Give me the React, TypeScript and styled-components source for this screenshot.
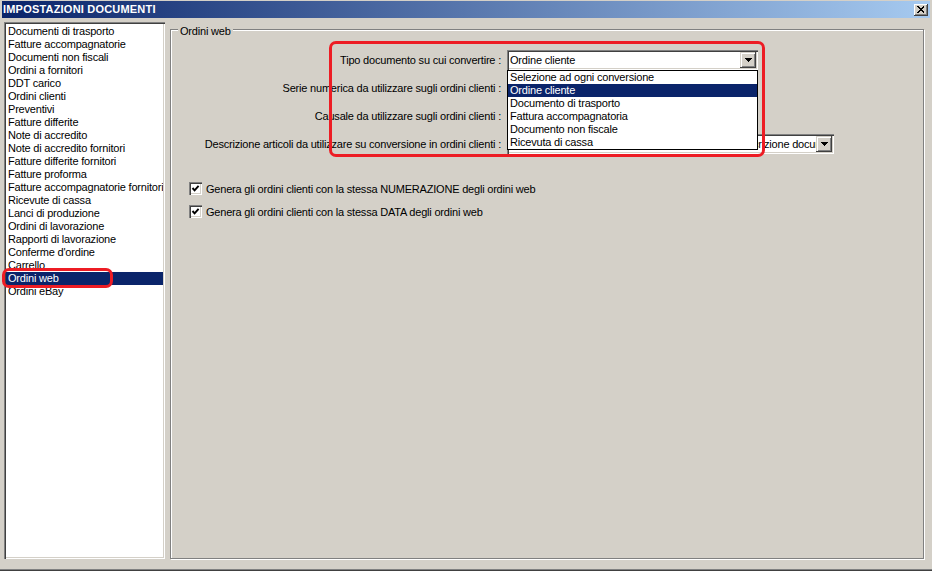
import React from "react";
import styled, { createGlobalStyle } from "styled-components";

const GlobalStyle = createGlobalStyle`
  html, body {
    margin: 0;
    padding: 0;
    background: #d4d0c8;
  }
  body {
    font-family: "Liberation Sans", Arial, sans-serif;
    font-size: 11px;
    color: #000;
  }
`;

const sections = [
  "Documenti di trasporto",
  "Fatture accompagnatorie",
  "Documenti non fiscali",
  "Ordini a fornitori",
  "DDT carico",
  "Ordini clienti",
  "Preventivi",
  "Fatture differite",
  "Note di accredito",
  "Note di accredito fornitori",
  "Fatture differite fornitori",
  "Fatture proforma",
  "Fatture accompagnatorie fornitori",
  "Ricevute di cassa",
  "Lanci di produzione",
  "Ordini di lavorazione",
  "Rapporti di lavorazione",
  "Conferme d'ordine",
  "Carrello",
  "Ordini web",
  "Ordini eBay",
];

const docTypes = [
  "Selezione ad ogni conversione",
  "Ordine cliente",
  "Documento di trasporto",
  "Fattura accompagnatoria",
  "Documento non fiscale",
  "Ricevuta di cassa",
];

const Window = styled.div`
  position: relative;
  width: 932px;
  height: 571px;
  box-sizing: border-box;
  background: #d4d0c8;
  padding-top: 1px;
  border-bottom: 1px solid #404040;
  box-shadow: inset 0 -1px #808080;
  overflow: hidden;
`;

const TitleBar = styled.div`
  height: 17px;
  margin: 0 2px 0 2px;
  display: flex;
  align-items: center;
  justify-content: space-between;
  background: linear-gradient(to right, #0a246a, #a6caf0);
  padding: 0 2px 0 1px;
`;

const Title = styled.span`
  color: #fff;
  font-weight: bold;
  font-size: 11px;
  letter-spacing: 0.2px;
  line-height: 17px;
`;

const CloseButton = styled.div`
  width: 14px;
  height: 12px;
  background: #d4d0c8;
  box-shadow: inset -1px -1px #404040, inset 1px 1px #fff, inset -2px -2px #808080;
  display: flex;
  align-items: center;
  justify-content: center;
`;

const Body = styled.div`
  display: flex;
  gap: 5px;
  padding: 4px 0 0 4px;
`;

const SectionList = styled.div`
  width: 161px;
  height: 537px;
  box-sizing: border-box;
  background: #fff;
  padding: 3px 2px 0 2px;
  box-shadow: inset 1px 1px #808080, inset 2px 2px #404040, inset -1px -1px #fff,
    inset -2px -2px #d4d0c8;
  overflow: hidden;
`;

const SectionItem = styled.div<{ $selected?: boolean }>`
  height: 13px;
  line-height: 13px;
  padding-left: 2px;
  white-space: nowrap;
  overflow: hidden;
  letter-spacing: -0.2px;
  background: ${(p) => (p.$selected ? "#0a246a" : "transparent")};
  color: ${(p) => (p.$selected ? "#fff" : "#000")};
`;

const GroupBox = styled.div`
  position: relative;
  margin-top: 7px;
  width: 754px;
  height: 530px;
  box-sizing: border-box;
  border: 1px solid #808080;
  box-shadow: inset 1px 1px #fff, 1px 1px #fff;
  padding-top: 20px;
`;

const GroupLegend = styled.span`
  position: absolute;
  top: -5px;
  left: 7px;
  padding: 0 2px;
  background: #d4d0c8;
  line-height: 13px;
  letter-spacing: -0.2px;
`;

const Rows = styled.div`
  display: flex;
  flex-direction: column;
  gap: 8px;
`;

const Row = styled.div`
  display: flex;
  align-items: center;
  height: 20px;
`;

const Label = styled.div`
  width: 332px;
  box-sizing: border-box;
  padding-right: 2px;
  text-align: right;
  letter-spacing: -0.2px;
  white-space: nowrap;
`;

const Combo = styled.div<{ $width: number }>`
  position: relative;
  margin-left: 4px;
  width: ${(p) => p.$width}px;
  height: 20px;
  box-sizing: border-box;
  padding: 2px;
  background: #fff;
  display: flex;
  align-items: center;
  box-shadow: inset 1px 1px #808080, inset 2px 2px #404040, inset -1px -1px #fff,
    inset -2px -2px #d4d0c8;
`;

const ComboText = styled.div`
  flex: 1;
  padding-left: 1px;
  white-space: nowrap;
  overflow: hidden;
  letter-spacing: -0.2px;
  line-height: 16px;
`;

const ArrowButton = styled.div`
  width: 16px;
  height: 16px;
  flex: none;
  background: #d4d0c8;
  box-shadow: inset -1px -1px #404040, inset 1px 1px #d4d0c8, inset 2px 2px #fff,
    inset -2px -2px #808080;
  display: flex;
  align-items: center;
  justify-content: center;
`;

const DropList = styled.div`
  position: absolute;
  z-index: 5;
  top: 100%;
  left: 0;
  width: 100%;
  box-sizing: border-box;
  border: 1px solid #000;
  background: #fff;
`;

const DropItem = styled.div<{ $selected?: boolean }>`
  height: 13px;
  line-height: 13px;
  padding-left: 2px;
  letter-spacing: -0.2px;
  white-space: nowrap;
  background: ${(p) => (p.$selected ? "#0a246a" : "#fff")};
  color: ${(p) => (p.$selected ? "#fff" : "#000")};
`;

const Checks = styled.div`
  margin-top: 28px;
  padding-left: 18px;
  display: flex;
  flex-direction: column;
  gap: 10px;
`;

const CheckRow = styled.div`
  display: flex;
  align-items: center;
  gap: 4px;
  height: 13px;
  letter-spacing: -0.2px;
  white-space: nowrap;
`;

const CheckBox = styled.div`
  width: 13px;
  height: 13px;
  box-sizing: border-box;
  background: #fff;
  box-shadow: inset 1px 1px #808080, inset 2px 2px #404040, inset -1px -1px #fff,
    inset -2px -2px #d4d0c8;
  display: flex;
  align-items: center;
  justify-content: center;
`;

const RedMark = styled.div<{ $x: number; $y: number; $w: number; $h: number }>`
  position: absolute;
  z-index: 10;
  left: ${(p) => p.$x}px;
  top: ${(p) => p.$y}px;
  width: ${(p) => p.$w}px;
  height: ${(p) => p.$h}px;
  box-sizing: border-box;
  border: 3px solid #ed1c24;
  border-radius: 7px;
  pointer-events: none;
`;

const Arrow = () => (
  <svg width="7" height="4" viewBox="0 0 7 4" shapeRendering="crispEdges">
    <polygon points="0,0 7,0 3.5,4" fill="#000" />
  </svg>
);

const Check = () => (
  <svg width="9" height="9" viewBox="0 0 9 9">
    <polyline points="1.5,4 3.6,6.4 7.6,1.8" fill="none" stroke="#000" strokeWidth="1.9" />
  </svg>
);

const CloseGlyph = () => (
  <svg width="8" height="7" viewBox="0 0 8 7" shapeRendering="crispEdges">
    <path d="M0.5 0.5 L7.5 6.5 M7.5 0.5 L0.5 6.5" stroke="#000" strokeWidth="1.4" />
  </svg>
);

const ComboBox: React.FC<{ width: number; value: string; open?: boolean }> = ({
  width,
  value,
  open,
}) => (
  <Combo $width={width}>
    <ComboText>{value}</ComboText>
    <ArrowButton>
      <Arrow />
    </ArrowButton>
    {open && (
      <DropList>
        {docTypes.map((t) => (
          <DropItem key={t} $selected={t === value}>
            {t}
          </DropItem>
        ))}
      </DropList>
    )}
  </Combo>
);

const App: React.FC = () => {
  return (
    <>
      <GlobalStyle />
      <Window>
        <TitleBar>
          <Title>IMPOSTAZIONI DOCUMENTI</Title>
          <CloseButton>
            <CloseGlyph />
          </CloseButton>
        </TitleBar>
        <Body>
          <SectionList>
            {sections.map((s) => (
              <SectionItem key={s} $selected={s === "Ordini web"}>
                {s}
              </SectionItem>
            ))}
          </SectionList>
          <GroupBox>
            <GroupLegend>Ordini web</GroupLegend>
            <Rows>
              <Row>
                <Label>Tipo documento su cui convertire :</Label>
                <ComboBox width={251} value="Ordine cliente" open />
              </Row>
              <Row>
                <Label>Serie numerica da utilizzare sugli ordini clienti :</Label>
                <ComboBox width={251} value="" />
              </Row>
              <Row>
                <Label>Causale da utilizzare sugli ordini clienti :</Label>
                <ComboBox width={251} value="" />
              </Row>
              <Row>
                <Label>Descrizione articoli da utilizzare su conversione in ordini clienti :</Label>
                <ComboBox
                  width={327}
                  value="Descrizione articolo dell'ordine web ed aggiunta descrizione documento"
                />
              </Row>
            </Rows>
            <Checks>
              <CheckRow>
                <CheckBox>
                  <Check />
                </CheckBox>
                Genera gli ordini clienti con la stessa NUMERAZIONE degli ordini web
              </CheckRow>
              <CheckRow>
                <CheckBox>
                  <Check />
                </CheckBox>
                Genera gli ordini clienti con la stessa DATA degli ordini web
              </CheckRow>
            </Checks>
          </GroupBox>
        </Body>
        <RedMark $x={329} $y={41} $w={436} $h={116} />
        <RedMark $x={2} $y={268} $w={111} $h={20} />
      </Window>
    </>
  );
};

export default App;
